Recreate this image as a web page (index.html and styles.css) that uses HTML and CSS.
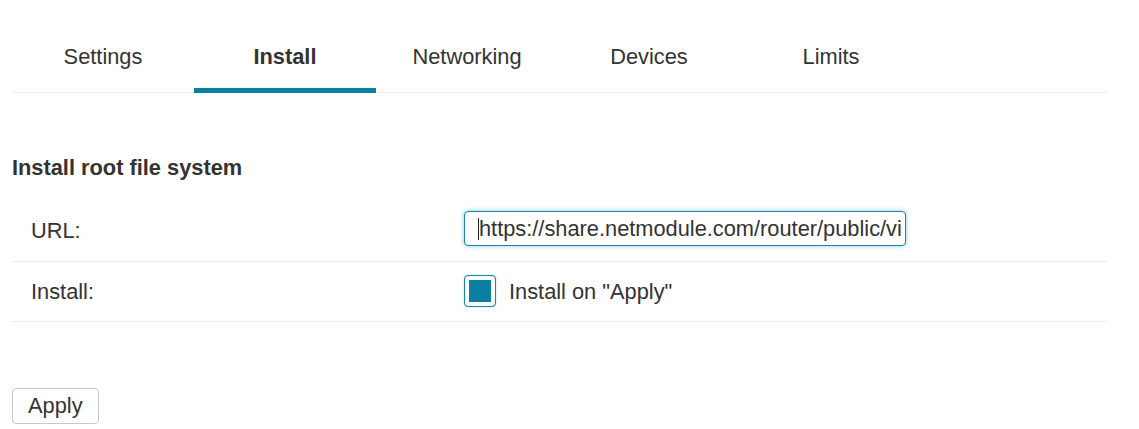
FILE: index.html
```html
<!DOCTYPE html>
<html lang="en">

<head>
   <meta charset="UTF-8">
   <meta name="viewport" content="width=device-width, initial-scale=1.0">
   <title>Container - Install</title>
   <link rel="stylesheet" href="styles.css">
</head>

<body>
   <div class="page">
      <!-- tab bar -->
      <div class="tabs">
         <a href="#" class="tab">Settings</a>
         <a href="#" class="tab active">Install</a>
         <a href="#" class="tab">Networking</a>
         <a href="#" class="tab">Devices</a>
         <a href="#" class="tab">Limits</a>
      </div>

      <h3 class="section-title">Install root file system</h3>

      <div class="form-table">
         <div class="form-row first">
            <label class="form-label" for="url">URL:</label>
            <div class="form-value">
               <span class="input-wrap">
                  <input id="url" class="text-input" type="text" value="https://share.netmodule.com/router/public/virtualization/rootfs.tar.gz">
                  <span class="caret"></span>
               </span>
            </div>
         </div>
         <div class="form-row">
            <label class="form-label" for="install">Install:</label>
            <div class="form-value">
               <input id="install" class="check" type="checkbox" checked>
               <label class="check-label" for="install">Install on "Apply"</label>
            </div>
         </div>
      </div>

      <button class="apply-btn">Apply</button>
   </div>
</body>

</html>
```

FILE: styles.css
```css
* {
   margin: 0;
   padding: 0;
   box-sizing: border-box;
   font-family: 'Liberation Sans', Arial, sans-serif;
}

body {
   background: #fff;
   color: #333;
   font-size: 21.8px;
}

.page {
   width: 1107px;
   padding: 21px 0 0 12px;
}

/* tabs */
.tabs {
   display: flex;
   border-bottom: 1px solid #eceeef;
}

.tab {
   width: 182px;
   padding: 23.5px 0 19.5px;
   line-height: 24px;
   text-align: center;
   color: #333;
   text-decoration: none;
   border-bottom: 5px solid transparent;
   margin-bottom: -1px;
}

.tab.active {
   font-weight: bold;
   border-bottom-color: #0a7fa0;
}

.section-title {
   font-size: 21.8px;
   font-weight: bold;
   line-height: 24px;
   margin-top: 63px;
}

/* form rows */
.form-table {
   margin-top: 21px;
}

.form-row {
   display: flex;
   align-items: center;
   height: 60px;
   border-bottom: 1px solid #e9ecee;
}

.form-row.first {
   height: 61px;
}

.form-label {
   width: 452px;
   padding-left: 19px;
   line-height: 24px;
}

.form-value {
   display: flex;
   align-items: center;
}

.input-wrap {
   position: relative;
   display: block;
   margin-bottom: 5px;
}

.text-input {
   width: 442px;
   height: 35px;
   padding: 0 4px 0 14px;
   border: 1px solid #1689aa;
   border-radius: 4px;
   font-size: 21.8px;
   color: #333;
   outline: none;
   caret-color: transparent;
   box-shadow: 0 0 5px rgba(10, 127, 160, 0.45);
}

.caret {
   position: absolute;
   left: 14px;
   top: 7px;
   width: 1px;
   height: 22px;
   background: #222;
}

.check {
   appearance: none;
   -webkit-appearance: none;
   width: 32px;
   height: 32px;
   padding: 4px;
   border: 1px solid #1689aa;
   border-radius: 4px;
   background: #0a7fa0;
   background-clip: content-box;
   box-shadow: 0 0 2px rgba(10, 127, 160, 0.35);
   margin: 0 13px 1px 0;
}

.check-label {
   line-height: 24px;
}

.apply-btn {
   margin-top: 66px;
   height: 36px;
   padding: 0 15px;
   background: #fff;
   border: 1px solid #c9c9c9;
   border-radius: 4px;
   font-size: 21.8px;
   color: #333;
   cursor: pointer;
}
```
